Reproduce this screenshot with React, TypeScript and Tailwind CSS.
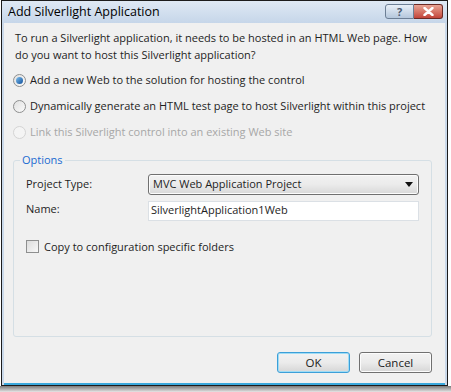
import React from "react";

const font = { fontFamily: '"Open Sans", "Noto Sans", sans-serif' };

function Radio({ checked, disabled }: { checked?: boolean; disabled?: boolean }) {
  return (
    <span
      className={`flex h-[13px] w-[13px] items-center justify-center rounded-full border ${
        disabled ? "border-[#d4d4d4] bg-[#f4f4f4]" : "border-[#8e8f8f] bg-gradient-to-br from-[#e0e0e0] to-[#fbfbfb]"
      }`}
    >
      {checked && (
        <span className="h-[7px] w-[7px] rounded-full bg-gradient-to-br from-[#7fc0ee] to-[#0b4f9a]" />
      )}
    </span>
  );
}

function WinButton({ label, isDefault }: { label: string; isDefault?: boolean }) {
  return (
    <button
      className={`h-[21px] w-[73px] rounded-[3px] border text-[11.5px] text-[#1b1b1b] ${
        isDefault
          ? "border-[#3c9fd8] bg-gradient-to-b from-[#f2f2f2] via-[#ebebeb] to-[#d6d6d6] shadow-[inset_0_0_0_1px_#9fdcf5]"
          : "border-[#707070] bg-gradient-to-b from-[#f2f2f2] via-[#ebebeb] to-[#d6d6d6] shadow-[inset_0_0_0_1px_#fcfcfc]"
      }`}
    >
      {label}
    </button>
  );
}

export default function App() {
  return (
    <div className="flex h-[392px] w-[451px] flex-col bg-white" style={font}>
      <div className="ml-[1px] flex h-[386px] w-[447px] flex-col border border-[#1c1c1c] bg-[#cad9ea]">
        {/* title bar */}
        <div className="flex h-[22px] items-center bg-gradient-to-b from-[#dfe9f4] to-[#c6d6e9] pl-[6px] pr-[4px]">
          <span className="text-[12.5px] text-black">Add Silverlight Application</span>
          <div className="ml-auto flex items-start self-start pt-[3px]">
            <span className="flex h-[15px] w-[29px] items-center justify-center rounded-l-[3px] border border-[#6d7f95] bg-gradient-to-b from-[#e9f0f8] to-[#b5c7dc] text-[11px] font-bold leading-none text-[#4a5a70]">
              ?
            </span>
            <span className="flex h-[15px] w-[29px] items-center justify-center rounded-r-[3px] border border-l-0 border-[#6b2a25] bg-gradient-to-b from-[#e8a495] to-[#c2443a]">
              <svg width="11" height="9" viewBox="0 0 11 9">
                <path d="M1.5 1 L9.5 8 M9.5 1 L1.5 8" stroke="#ffffff" strokeWidth="2.4" strokeLinecap="round" />
              </svg>
            </span>
          </div>
        </div>

        {/* client area */}
        <div className="mx-[2px] flex flex-1 flex-col border-b-2 border-[#3aa8dc] bg-[#f0f0f0] text-[11px] text-[#1e1e1e]">
          <p className="ml-[11px] mr-[8px] mt-[6px] leading-[17px]">
            To run a Silverlight application, it needs to be hosted in an HTML Web page. How do you want to host this Silverlight application?
          </p>

          <div className="ml-[9px] mt-[10px] flex flex-col gap-[11px]">
            <label className="flex h-[15px] items-center gap-[4px]">
              <Radio checked />
              <span>Add a new Web to the solution for hosting the control</span>
            </label>
            <label className="flex h-[15px] items-center gap-[4px]">
              <Radio />
              <span>Dynamically generate an HTML test page to host Silverlight within this project</span>
            </label>
            <label className="flex h-[15px] items-center gap-[4px] text-[#a7a7a7]">
              <Radio disabled />
              <span>Link this Silverlight control into an existing Web site</span>
            </label>
          </div>

          {/* Options group */}
          <fieldset className="ml-[9px] mr-[13px] mt-[12px] h-[185px] rounded-[3px] border border-[#d5dfe5] px-[12px] pt-[2px]">
            <legend className="ml-[-6px] px-[2px] text-[#1a6bd0]">Options</legend>
            <div className="mt-[3px] flex h-[21px] items-center">
              <span className="w-[122px]">Project Type:</span>
              <div className="flex h-[21px] flex-1 items-center rounded-[3px] border border-[#707070] bg-gradient-to-b from-[#f2f2f2] via-[#ebebeb] to-[#d8d8d8] pl-[4px] pr-[5px] shadow-[inset_0_0_0_1px_#fcfcfc]">
                <span>MVC Web Application Project</span>
                <svg className="ml-auto" width="8" height="5" viewBox="0 0 8 5">
                  <path d="M0 0 H8 L4 5 Z" fill="#111111" />
                </svg>
              </div>
            </div>
            <div className="mt-[6px] flex items-start">
              <span className="w-[122px]">Name:</span>
              <div className="flex h-[20px] flex-1 items-center border border-[#dbe0e5] bg-white pl-[2px]">
                SilverlightApplication1Web
              </div>
            </div>
            <label className="mt-[18px] flex items-center gap-[5px]">
              <span className="h-[13px] w-[13px] border border-[#8e8f8f] bg-gradient-to-br from-[#dcdcdc] to-[#f8f8f8]" />
              <span>Copy to configuration specific folders</span>
            </label>
          </fieldset>

          <div className="mr-[13px] mt-[15px] flex justify-end gap-[9px]">
            <WinButton label="OK" isDefault />
            <WinButton label="Cancel" />
          </div>
        </div>
      </div>
      <div className="h-[6px] w-full bg-gradient-to-b from-[#7a7a7a] to-[#e6e6e6]" />
    </div>
  );
}
